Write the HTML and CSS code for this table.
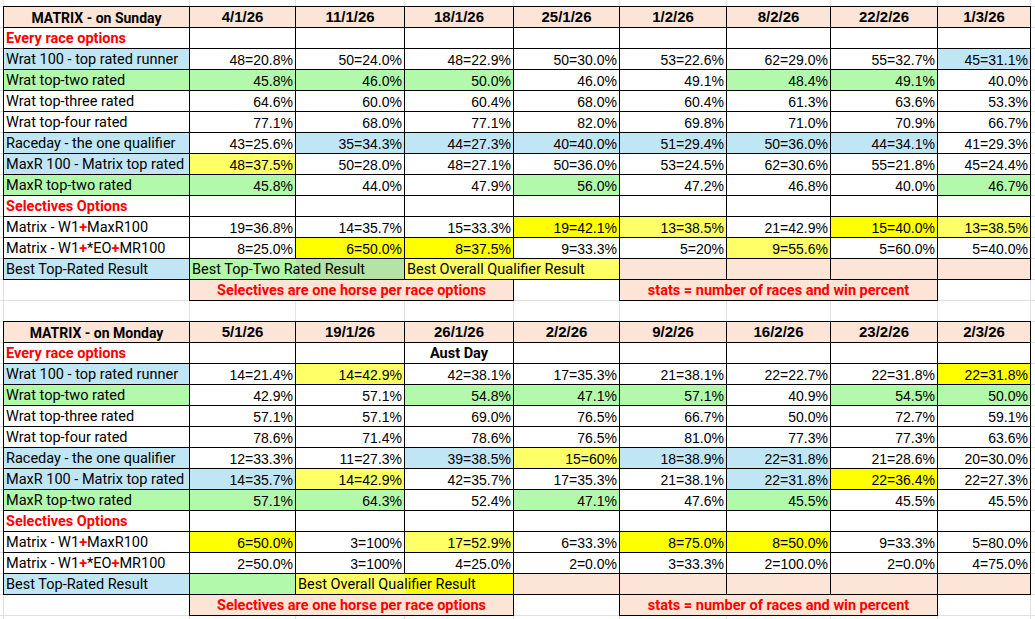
FILE: index.html
```html
<!DOCTYPE html>
<html>
<head>
<meta charset="utf-8">
<title>Matrix</title>
<link rel="stylesheet" href="styles.css">
</head>
<body>
<div class="sheet">
  <div class="tbl">
    <div class="row hdr"><div class="c lbl">MATRIX - on Sunday</div><div class="c">4/1/26</div><div class="c">11/1/26</div><div class="c">18/1/26</div><div class="c">25/1/26</div><div class="c">1/2/26</div><div class="c">8/2/26</div><div class="c">22/2/26</div><div class="c">1/3/26</div></div>
    <div class="row"><div class="c lbl sec">Every race options</div><div class="c"></div><div class="c"></div><div class="c"></div><div class="c"></div><div class="c"></div><div class="c"></div><div class="c"></div><div class="c"></div></div>
    <div class="row"><div class="c lbl b">Wrat 100 - top rated runner</div><div class="c">48=20.8%</div><div class="c">50=24.0%</div><div class="c">48=22.9%</div><div class="c">50=30.0%</div><div class="c">53=22.6%</div><div class="c">62=29.0%</div><div class="c">55=32.7%</div><div class="c b">45=31.1%</div></div>
    <div class="row"><div class="c lbl g">Wrat top-two rated</div><div class="c g">45.8%</div><div class="c g">46.0%</div><div class="c g">50.0%</div><div class="c">46.0%</div><div class="c">49.1%</div><div class="c g">48.4%</div><div class="c g">49.1%</div><div class="c">40.0%</div></div>
    <div class="row"><div class="c lbl">Wrat top-three rated</div><div class="c">64.6%</div><div class="c">60.0%</div><div class="c">60.4%</div><div class="c">68.0%</div><div class="c">60.4%</div><div class="c">61.3%</div><div class="c">63.6%</div><div class="c">53.3%</div></div>
    <div class="row"><div class="c lbl">Wrat top-four rated</div><div class="c">77.1%</div><div class="c">68.0%</div><div class="c">77.1%</div><div class="c">82.0%</div><div class="c">69.8%</div><div class="c">71.0%</div><div class="c">70.9%</div><div class="c">66.7%</div></div>
    <div class="row"><div class="c lbl b">Raceday - the one qualifier</div><div class="c">43=25.6%</div><div class="c b">35=34.3%</div><div class="c b">44=27.3%</div><div class="c b">40=40.0%</div><div class="c b">51=29.4%</div><div class="c b">50=36.0%</div><div class="c b">44=34.1%</div><div class="c">41=29.3%</div></div>
    <div class="row"><div class="c lbl b">MaxR 100 - Matrix top rated</div><div class="c ly">48=37.5%</div><div class="c">50=28.0%</div><div class="c">48=27.1%</div><div class="c">50=36.0%</div><div class="c">53=24.5%</div><div class="c">62=30.6%</div><div class="c">55=21.8%</div><div class="c">45=24.4%</div></div>
    <div class="row"><div class="c lbl g">MaxR top-two rated</div><div class="c g">45.8%</div><div class="c">44.0%</div><div class="c">47.9%</div><div class="c g">56.0%</div><div class="c">47.2%</div><div class="c">46.8%</div><div class="c">40.0%</div><div class="c g">46.7%</div></div>
    <div class="row"><div class="c lbl sec">Selectives Options</div><div class="c"></div><div class="c"></div><div class="c"></div><div class="c"></div><div class="c"></div><div class="c"></div><div class="c"></div><div class="c"></div></div>
    <div class="row"><div class="c lbl">Matrix - W1<span class="plus">+</span>MaxR100</div><div class="c">19=36.8%</div><div class="c">14=35.7%</div><div class="c">15=33.3%</div><div class="c y">19=42.1%</div><div class="c ly">13=38.5%</div><div class="c">21=42.9%</div><div class="c y">15=40.0%</div><div class="c ly">13=38.5%</div></div>
    <div class="row"><div class="c lbl">Matrix - W1<span class="plus">+</span>*EO<span class="plus">+</span>MR100</div><div class="c">8=25.0%</div><div class="c y">6=50.0%</div><div class="c y">8=37.5%</div><div class="c">9=33.3%</div><div class="c">5=20%</div><div class="c ly">9=55.6%</div><div class="c">5=60.0%</div><div class="c">5=40.0%</div></div>
    <div class="row"><div class="c lbl b">Best Top-Rated Result</div><div class="c lbl span2 gg">Best Top-Two Rated Result</div><div class="c lbl span2 ly">Best Overall Qualifier Result</div><div class="c p"></div><div class="c p"></div><div class="c p"></div><div class="c p"></div></div>
    <div class="row"><div class="e er"></div><div class="c note span3">Selectives are one horse per race options</div><div class="e er"></div><div class="c note span3">stats = number of races and win percent</div><div class="e"></div></div>
  </div>

  <div class="tbl">
    <div class="row hdr"><div class="c lbl">MATRIX - on Monday</div><div class="c">5/1/26</div><div class="c">19/1/26</div><div class="c">26/1/26</div><div class="c">2/2/26</div><div class="c">9/2/26</div><div class="c">16/2/26</div><div class="c">23/2/26</div><div class="c">2/3/26</div></div>
    <div class="row"><div class="c lbl sec">Every race options</div><div class="c"></div><div class="c"></div><div class="c lbl day">Aust Day</div><div class="c"></div><div class="c"></div><div class="c"></div><div class="c"></div><div class="c"></div></div>
    <div class="row"><div class="c lbl b">Wrat 100 - top rated runner</div><div class="c">14=21.4%</div><div class="c ly">14=42.9%</div><div class="c">42=38.1%</div><div class="c">17=35.3%</div><div class="c">21=38.1%</div><div class="c">22=22.7%</div><div class="c">22=31.8%</div><div class="c y">22=31.8%</div></div>
    <div class="row"><div class="c lbl g">Wrat top-two rated</div><div class="c">42.9%</div><div class="c">57.1%</div><div class="c g">54.8%</div><div class="c g">47.1%</div><div class="c g">57.1%</div><div class="c">40.9%</div><div class="c g">54.5%</div><div class="c g">50.0%</div></div>
    <div class="row"><div class="c lbl">Wrat top-three rated</div><div class="c">57.1%</div><div class="c">57.1%</div><div class="c">69.0%</div><div class="c">76.5%</div><div class="c">66.7%</div><div class="c">50.0%</div><div class="c">72.7%</div><div class="c">59.1%</div></div>
    <div class="row"><div class="c lbl">Wrat top-four rated</div><div class="c">78.6%</div><div class="c">71.4%</div><div class="c">78.6%</div><div class="c">76.5%</div><div class="c">81.0%</div><div class="c">77.3%</div><div class="c">77.3%</div><div class="c">63.6%</div></div>
    <div class="row"><div class="c lbl b">Raceday - the one qualifier</div><div class="c">12=33.3%</div><div class="c">11=27.3%</div><div class="c b">39=38.5%</div><div class="c ly">15=60%</div><div class="c b">18=38.9%</div><div class="c b">22=31.8%</div><div class="c">21=28.6%</div><div class="c">20=30.0%</div></div>
    <div class="row"><div class="c lbl b">MaxR 100 - Matrix top rated</div><div class="c b">14=35.7%</div><div class="c ly">14=42.9%</div><div class="c">42=35.7%</div><div class="c">17=35.3%</div><div class="c">21=38.1%</div><div class="c b">22=31.8%</div><div class="c y">22=36.4%</div><div class="c">22=27.3%</div></div>
    <div class="row"><div class="c lbl g">MaxR top-two rated</div><div class="c g">57.1%</div><div class="c g">64.3%</div><div class="c">52.4%</div><div class="c g">47.1%</div><div class="c">47.6%</div><div class="c g">45.5%</div><div class="c">45.5%</div><div class="c">45.5%</div></div>
    <div class="row"><div class="c lbl sec">Selectives Options</div><div class="c"></div><div class="c"></div><div class="c"></div><div class="c"></div><div class="c"></div><div class="c"></div><div class="c"></div><div class="c"></div></div>
    <div class="row"><div class="c lbl">Matrix - W1<span class="plus">+</span>MaxR100</div><div class="c y">6=50.0%</div><div class="c">3=100%</div><div class="c ly">17=52.9%</div><div class="c">6=33.3%</div><div class="c y">8=75.0%</div><div class="c y">8=50.0%</div><div class="c">9=33.3%</div><div class="c">5=80.0%</div></div>
    <div class="row"><div class="c lbl">Matrix - W1<span class="plus">+</span>*EO<span class="plus">+</span>MR100</div><div class="c">2=50.0%</div><div class="c">3=100%</div><div class="c">4=25.0%</div><div class="c">2=0.0%</div><div class="c">3=33.3%</div><div class="c">2=100.0%</div><div class="c">2=0.0%</div><div class="c">4=75.0%</div></div>
    <div class="row"><div class="c lbl b">Best Top-Rated Result</div><div class="c g"></div><div class="c lbl span2 yy">Best Overall Qualifier Result</div><div class="c p"></div><div class="c p"></div><div class="c p"></div><div class="c p"></div><div class="c p"></div></div>
    <div class="row"><div class="e er"></div><div class="c note span3">Selectives are one horse per race options</div><div class="e er"></div><div class="c note span3">stats = number of races and win percent</div><div class="e"></div></div>
  </div>
</div>
</body>
</html>
```

FILE: styles.css
```css
:root {
  --cols: 187px 106px 109px 109px 106px 107px 104px 107px 93px;
  --grid: #e1e1e1;
  --peach: #fce4d6;
  --blue: #c0e6f5;
  --green: #b3f9ab;
  --green2: #b5e2a5;
  --yellow: #ffff00;
  --lyellow: #ffff66;
}

html, body {
  margin: 0;
  padding: 0;
  background: #fff;
}

body {
  width: 1035px;
  height: 619px;
  overflow: hidden;
}

.sheet {
  width: 1035px;
  height: 619px;
  box-sizing: border-box;
  padding: 6px 0 0 3px;
  background-color: #fff;
  background-image:
    linear-gradient(to right,
      transparent 3px, var(--grid) 3px 4px,
      transparent 4px 189px, var(--grid) 189px 190px,
      transparent 190px 295px, var(--grid) 295px 296px,
      transparent 296px 404px, var(--grid) 404px 405px,
      transparent 405px 513px, var(--grid) 513px 514px,
      transparent 514px 619px, var(--grid) 619px 620px,
      transparent 620px 726px, var(--grid) 726px 727px,
      transparent 727px 830px, var(--grid) 830px 831px,
      transparent 831px 937px, var(--grid) 937px 938px,
      transparent 938px 1030px, var(--grid) 1030px 1031px,
      transparent 1031px),
    linear-gradient(to bottom, var(--grid) 1px, transparent 1px);
  background-position: 0 0, 0 6px;
  background-size: 100% 100%, 100% 21px;
  background-repeat: no-repeat, repeat-y;
}

.tbl {
  display: flex;
  flex-direction: column;
  width: 1027px;
}

.tbl + .tbl {
  margin-top: 20px;
}

.row {
  display: grid;
  grid-template-columns: var(--cols);
  height: 21px;
}

.row.hdr {
  height: 22px;
}

.c {
  box-sizing: border-box;
  border-right: 1px solid #000;
  border-bottom: 1px solid #000;
  background: #fff;
  color: #000;
  font-family: "Liberation Sans", Arial, sans-serif;
  font-size: 14px;
  line-height: 18px;
  text-align: right;
  padding: 2px 2px 0 2px;
  white-space: nowrap;
  overflow: visible;
}

.row > .c:first-child {
  border-left: 1px solid #000;
}

.hdr > .c {
  border-top: 1px solid #000;
  background: var(--peach);
  font-weight: bold;
  font-size: 15px;
  text-align: center;
  padding-top: 1px;
}

.lbl {
  font-family: Roboto, "Liberation Sans", sans-serif;
  font-size: 14.5px;
  text-align: left;
  padding-top: 2px;
}

.hdr > .lbl {
  text-align: center;
  font-size: 14px;
  padding-top: 2px;
}

.sec {
  color: #ff0000;
  font-weight: bold;
}

.day {
  font-weight: bold;
  text-align: center;
}

.plus {
  color: #ff0000;
  font-weight: bold;
}

.note {
  background: var(--peach);
  color: #ff0000;
  font-family: Roboto, "Liberation Sans", sans-serif;
  font-weight: bold;
  font-size: 14.5px;
  text-align: center;
}

.e {
  background: transparent;
}

.er {
  border-right: 1px solid #000;
}

.span2 {
  grid-column: span 2;
}

.span3 {
  grid-column: span 3;
}

.b { background: var(--blue); }
.g { background: var(--green); }
.y { background: var(--yellow); }
.ly { background: var(--lyellow); }
.p { background: var(--peach); }
.gg { background: linear-gradient(to right, var(--green) 106px, var(--green2) 106px); }
.yy { background: linear-gradient(to right, var(--lyellow) 109px, var(--yellow) 109px); }
```
